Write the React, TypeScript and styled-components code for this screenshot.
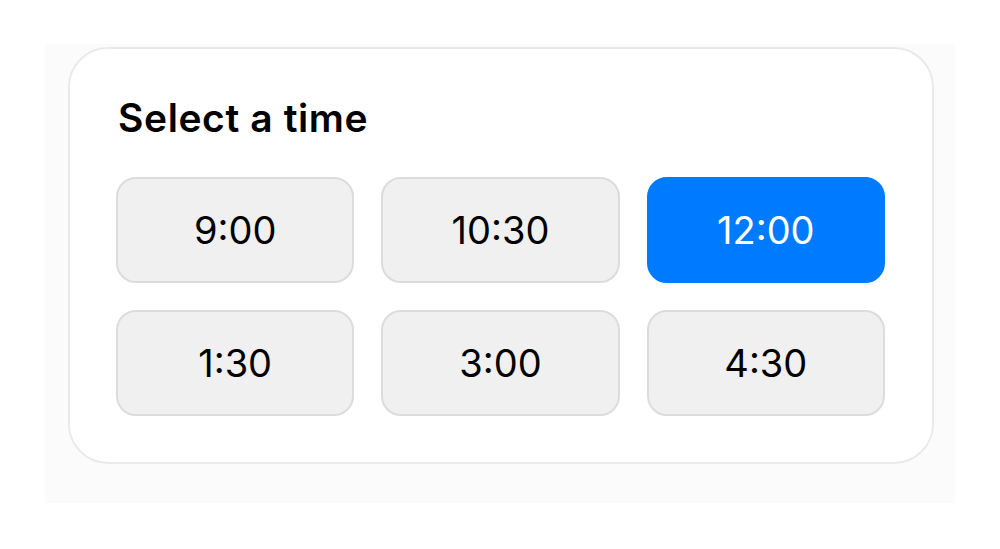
import {useState} from "react";
import styled, {createGlobalStyle} from "styled-components";

const GlobalStyle = createGlobalStyle`
    body {
        margin: 0;
        background: #ffffff;
        font-family: Inter, "Noto Sans", sans-serif;
    }
`;

const Page = styled.div`
    width: 1000px;
    height: 549px;
    padding: 44px 45px 0 45px;
    box-sizing: border-box;
`;

const Backdrop = styled.div`
    background: #fbfbfb;
    padding: 3px 21px 39px 23px;
`;

const Card = styled.div`
    background: #ffffff;
    border: 2px solid #eaeaea;
    border-radius: 40px;
    padding: 48px 47px 47px 46px;
    box-sizing: border-box;
    height: 417px;
`;

const Title = styled.h2`
    margin: 0 0 0 2px;
    font-size: 39px;
    line-height: 42px;
    font-weight: 600;
    color: #000000;
    letter-spacing: 0.6px;
`;

const Grid = styled.div`
    display: grid;
    grid-template-columns: repeat(3, 1fr);
    grid-auto-rows: 106px;
    gap: 27px 27px;
    margin-top: 38px;
`;

const Slot = styled.button<{ $selected: boolean }>`
    border-radius: 20px;
    border: 2px solid ${p => p.$selected ? "#007aff" : "#dcdcdc"};
    background: ${p => p.$selected ? "#007aff" : "#f0f0f0"};
    color: ${p => p.$selected ? "#ffffff" : "#000000"};
    font-family: Inter, "Noto Sans", sans-serif;
    font-size: 38px;
    font-weight: 400;
    cursor: pointer;
    padding: 0;
`;

const times = ["9:00", "10:30", "12:00", "1:30", "3:00", "4:30"];

export default function App(){
    const [selected, setSelected] = useState("12:00");

    return(
        <Page>
            <GlobalStyle/>
            <Backdrop>
                <Card>
                    <Title>Select a time</Title>
                    <Grid>
                        {times.map(t => (
                            <Slot key={t} $selected={t === selected} onClick={() => setSelected(t)}>{t}</Slot>
                        ))}
                    </Grid>
                </Card>
            </Backdrop>
        </Page>
    );
}
